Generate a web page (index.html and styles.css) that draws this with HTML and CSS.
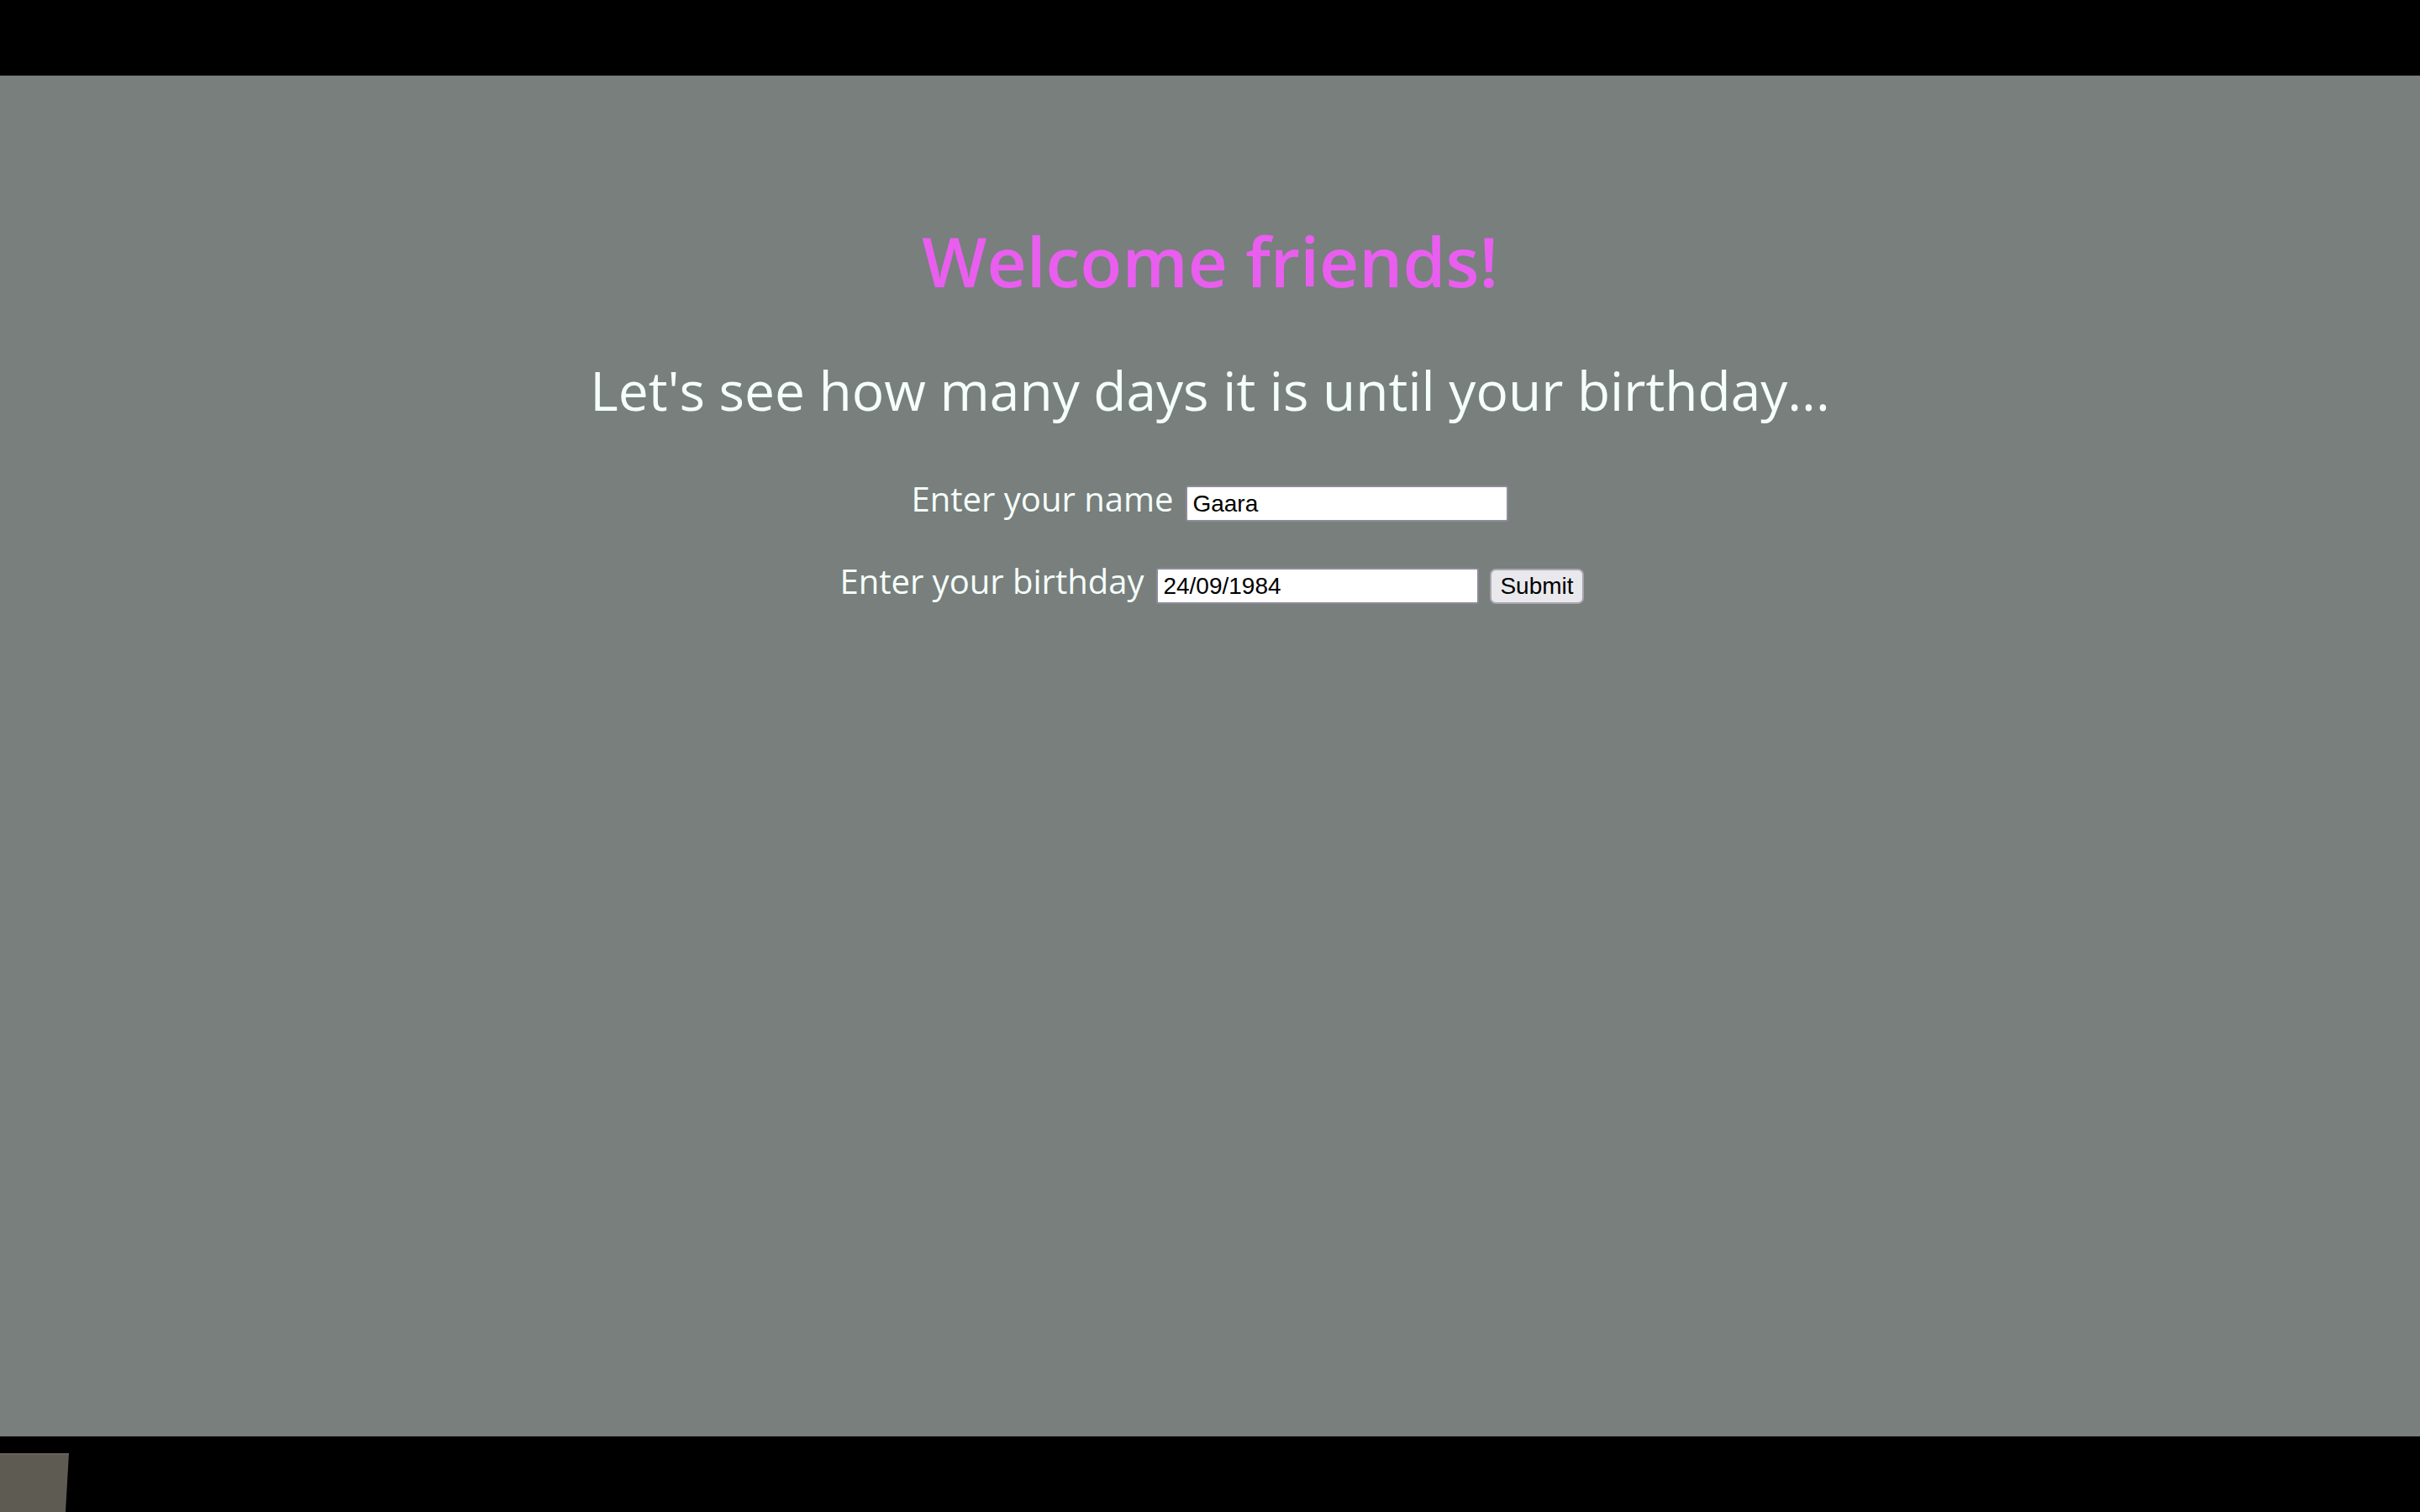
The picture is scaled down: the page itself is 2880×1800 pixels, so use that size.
FILE: index.html
```html
<!DOCTYPE html>
<html lang="en">
<head>
<meta charset="utf-8">
<title>Birthday countdown</title>
<link rel="stylesheet" href="styles.css">
</head>
<body>
<div class="top-bar"></div>
<main class="stage">
  <h1 class="title">Welcome friends!</h1>
  <h2 class="subtitle">Let's see how many days it is until your birthday...</h2>
  <form class="form">
    <div class="row">
      <label class="label" for="name">Enter your name</label>
      <input class="field" id="name" type="text" value="Gaara">
    </div>
    <div class="row row-second">
      <label class="label" for="bday">Enter your birthday</label>
      <input class="field" id="bday" type="text" value="24/09/1984">
      <button class="submit" type="button">Submit</button>
    </div>
  </form>
</main>
<div class="bottom-bar">
  <div class="corner-shape"></div>
</div>
</body>
</html>
```

FILE: styles.css
```css
html, body {
  margin: 0;
  padding: 0;
}

body {
  background: #000;
  width: 2880px;
  height: 1800px;
  overflow: hidden;
  font-family: "Open Sans", "Noto Sans", sans-serif;
}

.top-bar {
  height: 90px;
  background: #000;
}

.stage {
  height: 1620px;
  background: #787f7d;
  text-align: center;
  display: flex;
  flex-direction: column;
  align-items: center;
}

.title {
  margin: 163px 0 0;
  font-size: 82px;
  line-height: 114px;
  font-weight: 600;
  color: #e95eef;
}

.subtitle {
  margin: 53px 0 0;
  font-size: 64px;
  line-height: 90px;
  font-weight: 400;
  color: #f5fffa;
}

.form {
  margin-top: 57px;
  display: flex;
  flex-direction: column;
  align-items: center;
}

.row {
  display: flex;
  align-items: baseline;
  justify-content: center;
  gap: 15px;
}

.row-second {
  margin-top: 44px;
  padding-left: 4px;
}

.label {
  font-size: 40px;
  line-height: 54px;
  color: #f5fffa;
}

.field {
  box-sizing: border-box;
  width: 384px;
  height: 43px;
  margin: 0;
  padding: 3px 6px 1px;
  border: 2px solid #8e8b9a;
  border-radius: 3px;
  background: #fff;
  color: #000;
  font-family: "Liberation Sans", Arial, sans-serif;
  font-size: 28px;
}

.submit {
  box-sizing: border-box;
  height: 42px;
  margin: 0 0 0 -2px;
  padding: 0 10px;
  border: 2px solid #a7a6b0;
  border-radius: 7px;
  background: #e9e9ed;
  color: #000;
  font-family: "Liberation Sans", Arial, sans-serif;
  font-size: 28px;
}

.bottom-bar {
  height: 90px;
  background: #000;
  padding-top: 20px;
  box-sizing: border-box;
}

.corner-shape {
  width: 82px;
  height: 70px;
  background: #5e5b53;
  border-top: 2px solid #67645b;
  box-sizing: border-box;
  clip-path: polygon(0 0, 82px 0, 78px 70px, 0 70px);
}
```
